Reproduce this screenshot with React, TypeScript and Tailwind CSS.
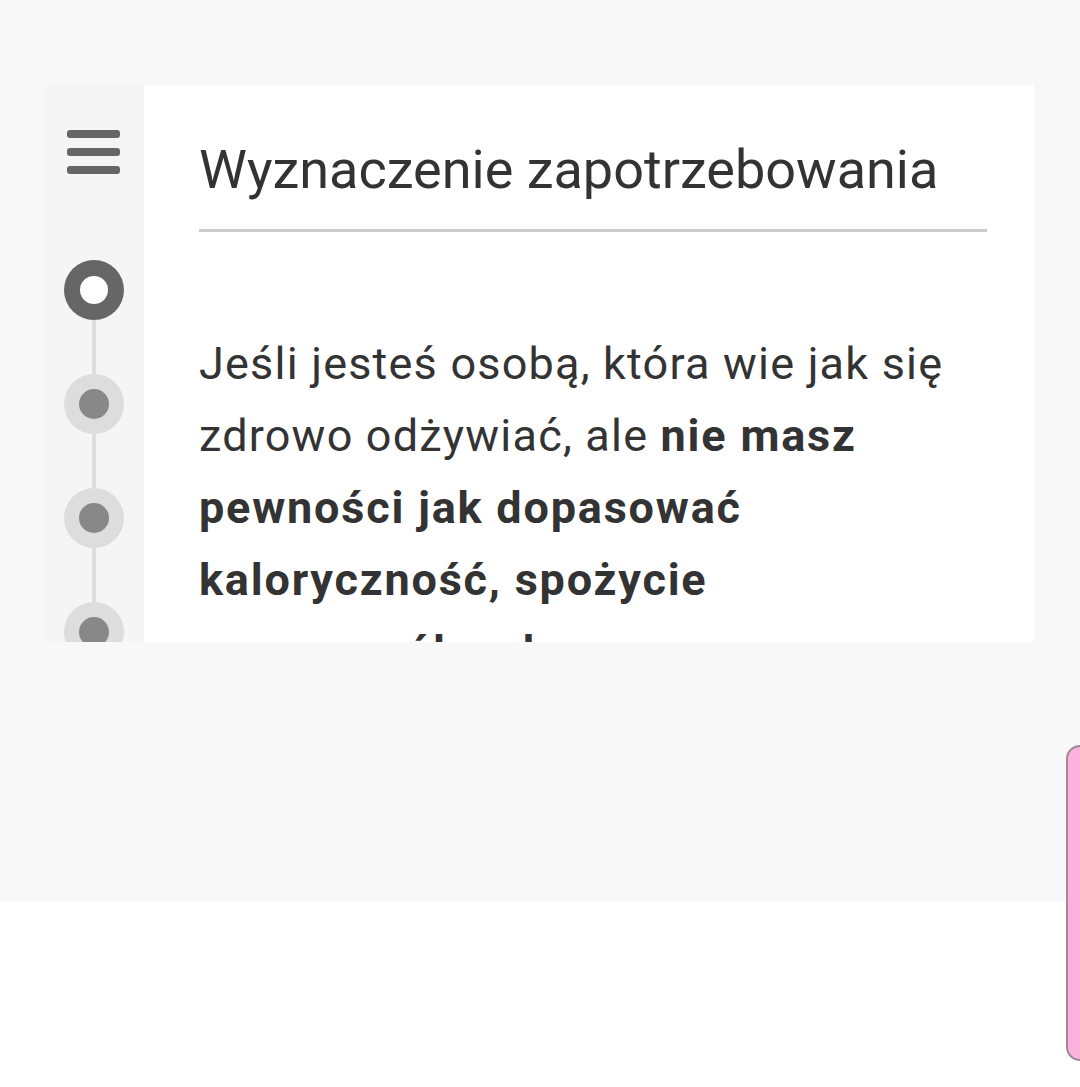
export default function App() {
  const steps = [0, 1, 2, 3];

  return (
    <div
      className="relative h-[1087px] w-[1080px] overflow-hidden bg-white text-[#333]"
      style={{ fontFamily: 'Roboto, "Liberation Sans", sans-serif' }}
    >
      <div className="h-[902px] bg-[#f8f8f8] pt-[85px] pl-[44px]">
        <div className="flex h-[557px] w-[990px] overflow-hidden">
          {/* side rail */}
          <div className="flex w-[100px] shrink-0 flex-col items-center bg-[#f5f5f5] pt-[45px]">
            <div className="flex w-[54px] flex-col gap-[10px] pr-[1px]">
              <span className="h-[8px] rounded-[3px] bg-[#666]" />
              <span className="h-[8px] rounded-[3px] bg-[#666]" />
              <span className="h-[8px] rounded-[3px] bg-[#666]" />
            </div>
            <div className="mt-[86px] flex flex-col items-center">
              {steps.map((i) => (
                <div key={i} className="flex flex-col items-center">
                  {i > 0 && <span className="h-[54px] w-[4px] bg-[#ddd]" />}
                  {i === 0 ? (
                    <span className="flex h-[60px] w-[60px] items-center justify-center rounded-full bg-[#666]">
                      <span className="h-[28px] w-[28px] rounded-full bg-white" />
                    </span>
                  ) : (
                    <span className="flex h-[60px] w-[60px] items-center justify-center rounded-full bg-[#ddd]">
                      <span className="h-[30px] w-[30px] rounded-full bg-[#888]" />
                    </span>
                  )}
                </div>
              ))}
            </div>
          </div>

          {/* content */}
          <div className="flex-1 bg-white pl-[55px] pr-[47px] pt-[50px]">
            <h1 className="border-b-[3px] border-[#ccc] pb-[24px] text-[54px] leading-[70px] font-normal text-[#333]">
              Wyznaczenie zapotrzebowania
            </h1>
            <p className="mt-[96px] text-[45px] leading-[72px] tracking-[1.2px] text-[#333]">
              Jeśli jesteś osobą, która wie jak się zdrowo odżywiać, ale{' '}
              <strong className="font-bold tracking-[1.8px]">
                nie masz pewności jak dopasować kaloryczność, spożycie poszczególnych
              </strong>
            </p>
          </div>
        </div>
      </div>

      {/* pink side tab */}
      <div className="absolute left-[1066px] top-[745px] h-[316px] w-[40px] rounded-[14px] border-2 border-[#a08898] bg-[#fbb2dc]" />
    </div>
  );
}
